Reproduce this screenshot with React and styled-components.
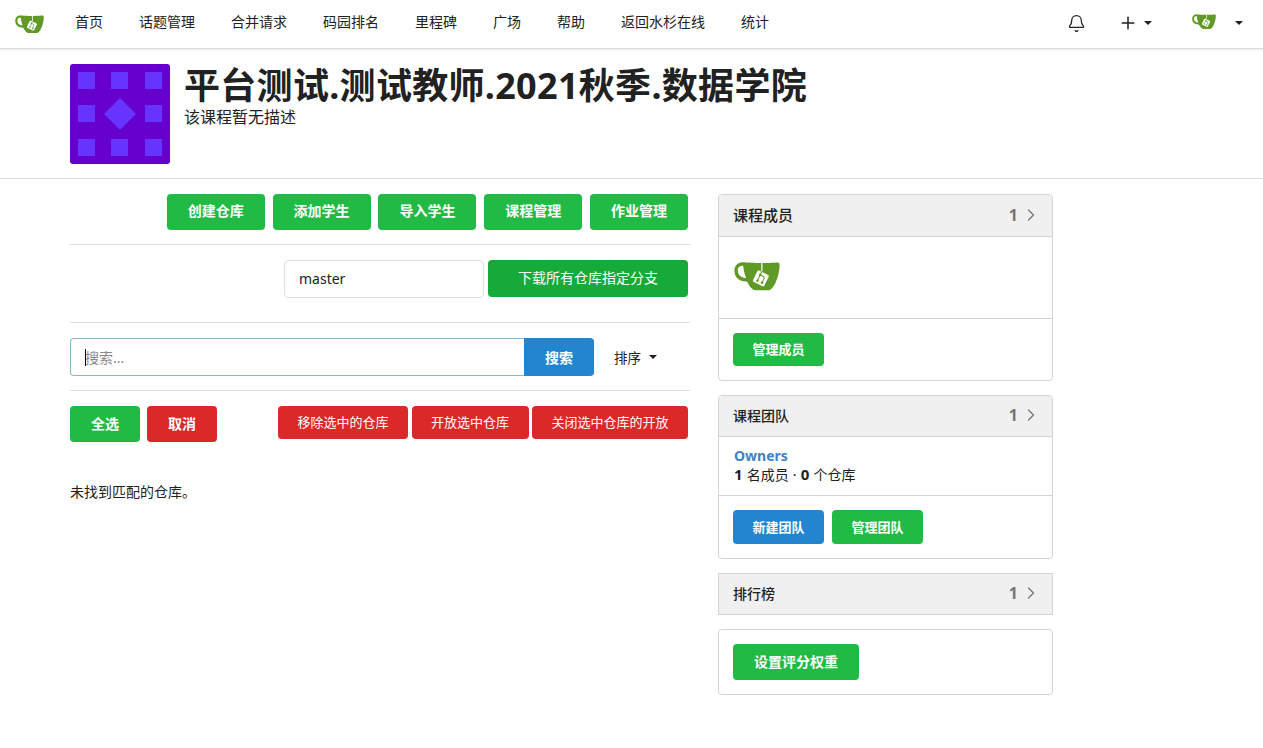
import React from 'react';
import styled, { createGlobalStyle } from 'styled-components';
import { Bell, Plus, ChevronRight } from 'lucide-react';

const GlobalStyle = createGlobalStyle`
  html, body {
    margin: 0;
    padding: 0;
    background: #fff;
    color: #212121;
    font-family: "Noto Sans", "Noto Sans CJK SC", "Liberation Sans", sans-serif;
    font-size: 14px;
  }
  * {
    box-sizing: border-box;
  }
`;

const Navbar = styled.nav`
  display: flex;
  align-items: center;
  height: 49px;
  padding: 0 0 2px 15px;
  background: #fff;
  border-bottom: 1px solid #ddd;
  box-shadow: 0 1px 2px rgba(34, 36, 38, 0.1);
`;
const NavLogo = styled.div`
  display: flex;
  width: 29px;
  margin-right: 13px;
`;
const NavItem = styled.a`
  padding: 0 18px 2px;
  font-size: 14px;
  line-height: 20px;
  color: #212121;
`;
const NavRight = styled.div`
  display: flex;
  align-items: center;
  margin-left: auto;
  padding-right: 20px;
`;
const NavIcon = styled.span`
  display: flex;
  align-items: center;
  gap: ${(props) => props.$gap || 0}px;
  margin-right: ${(props) => props.$right || 0}px;
`;
const NavAvatar = styled.span`
  display: flex;
  width: 24px;
  margin-bottom: 5px;
`;
const Caret = styled.i`
  display: inline-block;
  width: 0;
  height: 0;
  border-left: 4px solid transparent;
  border-right: 4px solid transparent;
  border-top: 4px solid #212121;
`;

const RepoHeader = styled.header`
  display: flex;
  gap: 14px;
  padding: 15px 70px 14px;
  border-bottom: 1px solid #ddd;
`;
const Avatar = styled.div`
  display: flex;
  width: 100px;
  height: 100px;
  border-radius: 3px;
  overflow: hidden;
`;
const Title = styled.h1`
  margin: 1px 0 0;
  font-size: 36px;
  font-weight: 700;
  line-height: 42px;
  letter-spacing: 0.3px;
  color: #212121;
`;
const Description = styled.p`
  margin: 0;
  font-size: 16px;
  line-height: 20px;
  color: #212121;
`;

const Main = styled.main`
  display: flex;
  gap: 28px;
  padding: 15px 70px 0;
`;
const LeftColumn = styled.section`
  width: 620px;
`;
const RightColumn = styled.aside`
  display: flex;
  flex-direction: column;
  gap: 14px;
  width: 335px;
`;

const Row = styled.div`
  display: flex;
  align-items: flex-start;
  justify-content: ${(props) => props.$justify || 'flex-start'};
  gap: ${(props) => props.$gap ?? 8}px;
  padding-right: 2px;
`;
const Divider = styled.hr`
  height: 1px;
  margin: ${(props) => props.$top || 14}px 0 15px;
  border: 0;
  background: #ddd;
`;

const colors = { green: '#21ba45', red: '#db2828', blue: '#2185d0', dark: '#16ab39' };

const Button = styled.button`
  width: ${(props) => props.$w}px;
  height: ${(props) => props.$h || 36}px;
  padding: 0 0 ${(props) => (props.$raised ? 2 : 0)}px;
  border: 0;
  border-radius: 4px;
  background: ${(props) => colors[props.$color]};
  color: #fff;
  font-family: inherit;
  font-size: ${(props) => props.$size || 13}px;
  font-weight: ${(props) => (props.$bold ? 700 : 400)};
  line-height: 1;
`;

const TextInput = styled.input`
  width: 200px;
  height: 38px;
  padding: 0 14px 2px;
  border: 1px solid #ddd;
  border-radius: 4px;
  outline: none;
  color: #212121;
  font-family: inherit;
  font-size: 14px;
`;

const SearchBox = styled.div`
  position: relative;
  display: flex;
  width: 454px;
`;
const SearchInput = styled.input`
  flex: 1;
  min-width: 0;
  height: 38px;
  padding: 0 14px;
  border: 1px solid #85b7d9;
  border-right: 0;
  border-radius: 4px 0 0 4px;
  outline: none;
  font-family: inherit;
  font-size: 14px;

  &::placeholder {
    color: #8a8a8a;
  }
`;
const TextCaret = styled.span`
  position: absolute;
  left: 15px;
  top: 11px;
  width: 1px;
  height: 17px;
  background: #000;
`;
const SearchButton = styled.button`
  width: 70px;
  height: 38px;
  padding: 0;
  border: 0;
  border-radius: 0 4px 4px 0;
  background: #2185d0;
  color: #fff;
  font-family: inherit;
  font-size: 14px;
  font-weight: 700;
`;
const SortMenu = styled.div`
  display: flex;
  align-items: center;
  gap: 8px;
  height: 38px;
  margin-left: 20px;
  font-size: 13.5px;
  white-space: nowrap;
`;

const BulkRow = styled.div`
  display: flex;
  align-items: flex-start;
  gap: 7px;
`;
const BulkActions = styled.div`
  display: flex;
  gap: 3.5px;
  margin-left: 54px;
`;
const EmptyText = styled.p`
  margin: 40px 0 0;
  font-size: 14px;
  line-height: 20px;
  color: #212121;
`;

const Card = styled.div`
  border: 1px solid #d4d4d5;
  border-radius: ${(props) => (props.$square ? '0' : '4px')};
  overflow: hidden;
`;
const CardHeader = styled.div`
  display: flex;
  align-items: center;
  height: ${(props) => props.$h || 42}px;
  padding: 0 11px 2px 14px;
  background: #f0f0f0;
  border-bottom: ${(props) => (props.$last ? '0' : '1px solid #d4d4d5')};
  font-size: ${(props) => props.$size || 14}px;
  font-weight: 500;
  color: #212121;
`;
const CardCount = styled.span`
  display: flex;
  align-items: center;
  gap: 3px;
  margin-left: auto;
  color: #767676;
  font-size: 16px;
  font-weight: 700;
`;
const CardBody = styled.div`
  height: ${(props) => props.$h}px;
  padding: ${(props) => props.$pad};
  border-bottom: 1px solid #d4d4d5;
`;
const CardButtons = styled.div`
  display: flex;
  gap: 8px;
  padding: 14px;
`;
const MemberIcon = styled.div`
  display: flex;
  width: 46px;
`;
const TeamName = styled.a`
  display: block;
  color: #4183c4;
  font-size: 14px;
  font-weight: 700;
  line-height: 19px;
`;
const TeamMeta = styled.div`
  font-size: 14px;
  line-height: 18px;
  word-spacing: 0.5px;
  color: #212121;

  & b {
    font-size: 15px;
  }
`;

const GiteaLogo = () => (
  <svg viewBox="0 0 640 640" width="100%" height="100%">
    <path
      fill="#fff"
      d="m395.9 484.2-126.9-61c-12.5-6-17.9-21.2-11.8-33.8l61-126.9c6-12.5 21.2-17.9 33.8-11.8 17.2 8.3 27.1 13 27.1 13l-.1-109.2 16.7-.1.1 117.1s57.4 24.2 83.1 40.1c3.7 2.3 10.2 6.8 12.9 14.4 2.1 6.1 2 13.1-1 19.3l-61 126.9c-6.2 12.7-21.4 18.1-33.9 12"
    />
    <path
      fill="#609926"
      d="M622.7 149.8c-4.1-4.1-9.6-4-9.6-4s-117.2 6.6-177.9 8c-13.3.3-26.5.6-39.6.7v117.2c-5.5-2.6-11.1-5.3-16.6-7.9 0-36.4-.1-109.2-.1-109.2-29 .4-89.2-2.2-89.2-2.2s-141.4-7.1-156.8-8.5c-9.8-.6-22.5-2.1-39 1.5-8.7 1.8-33.5 7.4-53.8 26.9C-4.9 212.4 6.6 276.2 8 285.8c1.7 11.7 6.9 44.2 31.7 72.5 45.8 56.1 144.4 54.8 144.4 54.8s12.1 28.9 30.6 55.5c25 33.1 50.7 58.9 75.7 62 63 0 188.9-.1 188.9-.1s12 .1 28.3-10.3c14-8.5 26.5-23.4 26.5-23.4S547 483 565 451.5c5.5-9.7 10.1-19.1 14.1-28 0 0 55.2-117.1 55.2-231.1-1.1-34.5-9.6-40.6-11.6-42.6M125.6 353.9c-25.9-8.5-36.9-18.7-36.9-18.7S69.6 321.8 60 295.4c-16.5-44.2-1.4-71.2-1.4-71.2s8.4-22.5 38.5-30c13.8-3.7 31-3.1 31-3.1s7.1 59.4 15.7 94.2c7.2 29.2 24.8 77.7 24.8 77.7s-26.1-3.1-43-9.1m300.3 107.6s-6.1 14.5-19.6 15.4c-5.8.4-10.3-1.2-10.3-1.2s-.3-.1-5.3-2.1l-112.9-55s-10.9-5.7-12.8-15.6c-2.2-8.1 2.7-18.1 2.7-18.1L322 273s4.8-9.7 12.2-13c.6-.3 2.3-1 4.5-1.5 8.1-2.1 18 2.8 18 2.8L467.4 315s12.6 5.7 15.3 16.2c1.9 7.4-.5 14-1.8 17.2-6.3 15.4-55 113.1-55 113.1"
    />
    <path
      fill="#609926"
      d="M326.8 380.1c-8.2.1-15.4 5.8-17.3 13.8s2 16.3 9.1 20c7.7 4 17.5 1.8 22.7-5.4 5.1-7.1 4.3-16.9-1.8-23.1l24-49.1c1.5.1 3.7.2 6.2-.5 4.1-.9 7.1-3.6 7.1-3.6 4.2 1.8 8.6 3.8 13.2 6.1 4.8 2.4 9.3 4.9 13.4 7.3.9.5 1.8 1.1 2.8 1.9 1.6 1.3 3.4 3.1 4.7 5.5 1.9 5.5-1.9 14.9-1.9 14.9-2.3 7.6-18.4 40.6-18.4 40.6-8.1-.2-15.3 5-17.7 12.5-2.6 8.1 1.1 17.3 8.9 21.3s17.4 1.7 22.5-5.3c5-6.8 4.6-16.3-1.1-22.6 1.9-3.7 3.7-7.4 5.6-11.3 5-10.4 13.5-30.4 13.5-30.4.9-1.7 5.7-10.3 2.7-21.3-2.5-11.4-12.6-16.7-12.6-16.7-12.2-7.9-29.2-15.2-29.2-15.2s0-4.1-1.1-7.1c-1.1-3.1-2.8-5.1-3.9-6.3 4.7-9.7 9.4-19.3 14.1-29-4.1-2-8.1-4-12.2-6.1-4.8 9.8-9.7 19.7-14.5 29.5-6.7-.1-12.9 3.5-16.1 9.4-3.4 6.3-2.7 14.1 1.9 19.8z"
    />
  </svg>
);

const CourseAvatar = () => (
  <svg viewBox="0 0 100 100" width="100" height="100">
    <rect width="100" height="100" fill="#6600cc" />
    {[8, 41, 75].map((y) =>
      [8, 41, 75].map((x) =>
        x === 41 && y === 41 ? null : (
          <rect key={`${x}-${y}`} x={x} y={y} width="17" height="17" fill="#6633ff" />
        ),
      ),
    )}
    <polygon points="50,34 66,50 50,66 34,50" fill="#6633ff" />
  </svg>
);

const navItems = ['首页', '话题管理', '合并请求', '码园排名', '里程碑', '广场', '帮助', '返回水杉在线', '统计'];

const topButtons = ['创建仓库', '添加学生', '导入学生', '课程管理', '作业管理'];

const Count = () => (
  <CardCount>
    1 <ChevronRight size={20} strokeWidth={1.5} />
  </CardCount>
);

const App = () => {
  return (
    <>
      <GlobalStyle />
      <Navbar>
        <NavLogo>
          <GiteaLogo />
        </NavLogo>
        {navItems.map((item) => (
          <NavItem key={item}>{item}</NavItem>
        ))}
        <NavRight>
          <NavIcon $right={32}>
            <Bell size={19} strokeWidth={1.6} color="#212121" />
          </NavIcon>
          <NavIcon $gap={6} $right={40}>
            <Plus size={20} strokeWidth={1.8} color="#212121" />
            <Caret />
          </NavIcon>
          <NavIcon $gap={19}>
            <NavAvatar>
              <GiteaLogo />
            </NavAvatar>
            <Caret />
          </NavIcon>
        </NavRight>
      </Navbar>

      <RepoHeader>
        <Avatar>
          <CourseAvatar />
        </Avatar>
        <div>
          <Title>平台测试.测试教师.2021秋季.数据学院</Title>
          <Description>该课程暂无描述</Description>
        </div>
      </RepoHeader>

      <Main>
        <LeftColumn>
          <Row $justify="flex-end" $gap={7.8}>
            {topButtons.map((label) => (
              <Button key={label} $w={98} $color="green" $size={14} $bold $raised>
                {label}
              </Button>
            ))}
          </Row>
          <Divider />
          <Row $justify="flex-end" $gap={4}>
            <TextInput defaultValue="master" />
            <Button $w={200} $h={37} $color="dark" $size={14} $raised>
              下载所有仓库指定分支
            </Button>
          </Row>
          <Divider $top={24} />
          <Row $gap={0}>
            <SearchBox>
              <SearchInput placeholder="搜索..." />
              <TextCaret />
            </SearchBox>
            <SearchButton>搜索</SearchButton>
            <SortMenu>
              排序
              <Caret />
            </SortMenu>
          </Row>
          <Divider />
          <BulkRow>
            <Button $w={70} $color="green" $size={14} $bold>
              全选
            </Button>
            <Button $w={70} $color="red" $size={14} $bold>
              取消
            </Button>
            <BulkActions>
              <Button $w={130} $h={33} $color="red">
                移除选中的仓库
              </Button>
              <Button $w={117} $h={33} $color="red">
                开放选中仓库
              </Button>
              <Button $w={156} $h={33} $color="red">
                关闭选中仓库的开放
              </Button>
            </BulkActions>
          </BulkRow>
          <EmptyText>未找到匹配的仓库。</EmptyText>
        </LeftColumn>

        <RightColumn>
          <Card>
            <CardHeader $size={15}>
              课程成员
              <Count />
            </CardHeader>
            <CardBody $h={82} $pad="15px">
              <MemberIcon>
                <GiteaLogo />
              </MemberIcon>
            </CardBody>
            <CardButtons>
              <Button $w={91} $h={33} $color="green" $bold>
                管理成员
              </Button>
            </CardButtons>
          </Card>

          <Card>
            <CardHeader $h={41}>
              课程团队
              <Count />
            </CardHeader>
            <CardBody $h={59} $pad="9px 15px">
              <TeamName>Owners</TeamName>
              <TeamMeta>
                <b>1</b> 名成员 · <b>0</b> 个仓库
              </TeamMeta>
            </CardBody>
            <CardButtons>
              <Button $w={91} $h={34} $color="blue" $bold>
                新建团队
              </Button>
              <Button $w={91} $h={34} $color="green" $bold>
                管理团队
              </Button>
            </CardButtons>
          </Card>

          <Card $square>
            <CardHeader $last $h={40}>
              排行榜
              <Count />
            </CardHeader>
          </Card>

          <Card>
            <CardButtons>
              <Button $w={126} $color="green" $size={14} $bold>
                设置评分权重
              </Button>
            </CardButtons>
          </Card>
        </RightColumn>
      </Main>
    </>
  );
};

export default App;
